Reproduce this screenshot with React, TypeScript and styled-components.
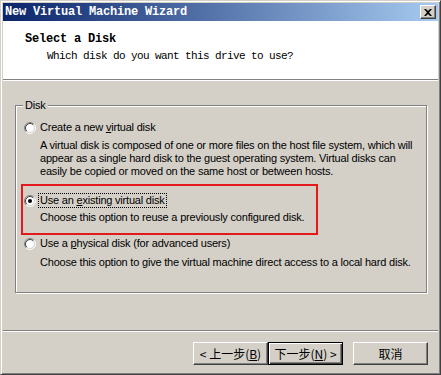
import styled, { createGlobalStyle } from 'styled-components';

const GlobalStyle = createGlobalStyle`
  html, body {
    margin: 0;
    padding: 0;
    background: #d4d0c8;
  }
  * {
    box-sizing: border-box;
  }
`;

const Window = styled.div`
  width: 441px;
  height: 375px;
  display: flex;
  flex-direction: column;
  padding: 2px;
  background: #d4d0c8;
  border: 1px solid;
  border-color: #d4d0c8 #404040 #404040 #d4d0c8;
  box-shadow: inset 1px 1px 0 #fff, inset -1px -1px 0 #808080;
`;

const TitleBar = styled.div`
  height: 18px;
  display: flex;
  align-items: center;
  justify-content: space-between;
  padding: 0 2px 0 2px;
  background: linear-gradient(to right, #0a246a, #a6caf0);
`;

const Title = styled.span`
  font-family: 'Liberation Mono', monospace;
  font-weight: bold;
  font-size: 12px;
  letter-spacing: -0.2px;
  color: #fff;
  white-space: nowrap;
`;

const CloseButton = styled.div`
  width: 16px;
  height: 14px;
  display: flex;
  align-items: center;
  justify-content: center;
  background: #d4d0c8;
  border: 1px solid;
  border-color: #fff #404040 #404040 #fff;
  box-shadow: inset -1px -1px 0 #808080;
`;

const Header = styled.div`
  height: 59px;
  background: #fff;
  padding: 11px 0 0 22px;
  border-bottom: 1px solid #808080;
  box-shadow: 0 1px 0 #fff;
`;

const HeaderTitle = styled.div`
  font-family: 'Liberation Mono', monospace;
  font-weight: bold;
  font-size: 12px;
  letter-spacing: -0.2px;
  line-height: 14px;
  color: #000;
`;

const HeaderSub = styled.div`
  font-family: 'Liberation Mono', monospace;
  font-size: 11px;
  letter-spacing: -0.6px;
  line-height: 14px;
  margin: 3px 0 0 22px;
  color: #000;
`;

const Body = styled.div`
  flex: 1;
  padding: 25px 11px 0 12px;
`;

const GroupBox = styled.div`
  position: relative;
  height: 188px;
  border: 1px solid #808080;
  box-shadow: 1px 1px 0 #fff, inset 1px 1px 0 #fff;
  padding: 15px 0 0 5px;
`;

const Legend = styled.span`
  position: absolute;
  top: -7px;
  left: 7px;
  padding: 0 2px;
  background: #d4d0c8;
`;

const Text = styled.div`
  font-family: 'Liberation Sans', Arial, sans-serif;
  font-size: 11px;
  letter-spacing: -0.2px;
  line-height: 13px;
  color: #000;
  white-space: nowrap;
`;

const Option = styled.div<{ $highlight?: boolean; $top: number; $gap: number }>`
  margin-top: ${(p) => p.$top}px;
  display: grid;
  grid-template-columns: 16px auto;
  row-gap: ${(p) => p.$gap}px;
  padding-left: 3px;
  ${(p) =>
    p.$highlight
      ? `
    width: 297px;
    padding: 8px 0 9px 1px;
    border: 2px solid #e3191c;
  `
      : ''}
`;

const RadioCell = styled.div`
  display: flex;
  align-items: center;
  height: 13px;
`;

const Label = styled(Text)<{ $focus?: boolean }>`
  grid-column: 2;
  width: fit-content;
  padding: 0 1px;
  margin-left: -1px;
  outline: ${(p) => (p.$focus ? '1px dotted #000' : 'none')};
  outline-offset: 0;
`;

const Desc = styled(Text)`
  grid-column: 2;
`;

const Footer = styled.div`
  height: 42px;
  display: flex;
  justify-content: flex-end;
  align-items: flex-start;
  padding: 11px 10px 0 0;
  border-top: 1px solid #808080;
  box-shadow: inset 0 1px 0 #fff;
`;

const Button = styled.div<{ $default?: boolean; $gap?: number }>`
  width: 75px;
  height: 23px;
  margin-left: ${(p) => p.$gap ?? 0}px;
  display: flex;
  align-items: center;
  justify-content: center;
  font-family: 'Noto Sans CJK SC', 'Liberation Sans', sans-serif;
  font-size: 12px;
  color: #000;
  background: #d4d0c8;
  border: 1px solid;
  border-color: ${(p) => (p.$default ? '#000' : '#fff #404040 #404040 #fff')};
  box-shadow: ${(p) =>
    p.$default
      ? 'inset 1px 1px 0 #fff, inset -1px -1px 0 #404040, inset -2px -2px 0 #808080'
      : 'inset -1px -1px 0 #808080'};
  white-space: pre;
`;

const U = styled.span`
  text-decoration: underline;
`;

function Radio({ checked }: { checked?: boolean }) {
  const arc = (r: number) => {
    const d = r * 0.7071;
    return `M ${6 - d} ${6 + d} A ${r} ${r} 0 0 1 ${6 + d} ${6 - d}`;
  };
  const arcBack = (r: number) => {
    const d = r * 0.7071;
    return `M ${6 + d} ${6 - d} A ${r} ${r} 0 0 1 ${6 - d} ${6 + d}`;
  };
  return (
    <svg width="12" height="12" viewBox="0 0 12 12">
      <circle cx="6" cy="6" r="5" fill="#fff" />
      <path d={arc(5.5)} stroke="#808080" fill="none" />
      <path d={arcBack(5.5)} stroke="#fff" fill="none" />
      <path d={arc(4.5)} stroke="#404040" fill="none" />
      <path d={arcBack(4.5)} stroke="#d4d0c8" fill="none" />
      {checked && <circle cx="6" cy="6" r="2" fill="#000" />}
    </svg>
  );
}

export default function App() {
  return (
    <>
      <GlobalStyle />
      <Window>
        <TitleBar>
          <Title>New Virtual Machine Wizard</Title>
          <CloseButton>
            <svg width="8" height="7" viewBox="0 0 8 7">
              <path d="M0 0 L2 0 L4 2 L6 0 L8 0 L5 3.5 L8 7 L6 7 L4 5 L2 7 L0 7 L3 3.5 Z" fill="#000" />
            </svg>
          </CloseButton>
        </TitleBar>
        <Header>
          <HeaderTitle>Select a Disk</HeaderTitle>
          <HeaderSub>Which disk do you want this drive to use?</HeaderSub>
        </Header>
        <Body>
          <GroupBox>
            <Legend>
              <Text>Disk</Text>
            </Legend>
            <Option $top={0} $gap={5}>
              <RadioCell>
                <Radio />
              </RadioCell>
              <Label>
                Create a new <U>v</U>irtual disk
              </Label>
              <Desc>
                A virtual disk is composed of one or more files on the host file system, which will
                <br />
                appear as a single hard disk to the guest operating system. Virtual disks can
                <br />
                easily be copied or moved on the same host or between hosts.
              </Desc>
            </Option>
            <Option $top={6} $gap={4} $highlight>
              <RadioCell>
                <Radio checked />
              </RadioCell>
              <Label $focus>
                Use an <U>e</U>xisting virtual disk
              </Label>
              <Desc>Choose this option to reuse a previously configured disk.</Desc>
            </Option>
            <Option $top={2} $gap={6}>
              <RadioCell>
                <Radio />
              </RadioCell>
              <Label>
                Use a <U>p</U>hysical disk (for advanced users)
              </Label>
              <Desc>
                Choose this option to give the virtual machine direct access to a local hard disk.
              </Desc>
            </Option>
          </GroupBox>
        </Body>
        <Footer>
          <Button>
            {'< 上一步('}
            <U>B</U>
            {')'}
          </Button>
          <Button $default>
            {'下一步('}
            <U>N</U>
            {') >'}
          </Button>
          <Button $gap={10}>取消</Button>
        </Footer>
      </Window>
    </>
  );
}
